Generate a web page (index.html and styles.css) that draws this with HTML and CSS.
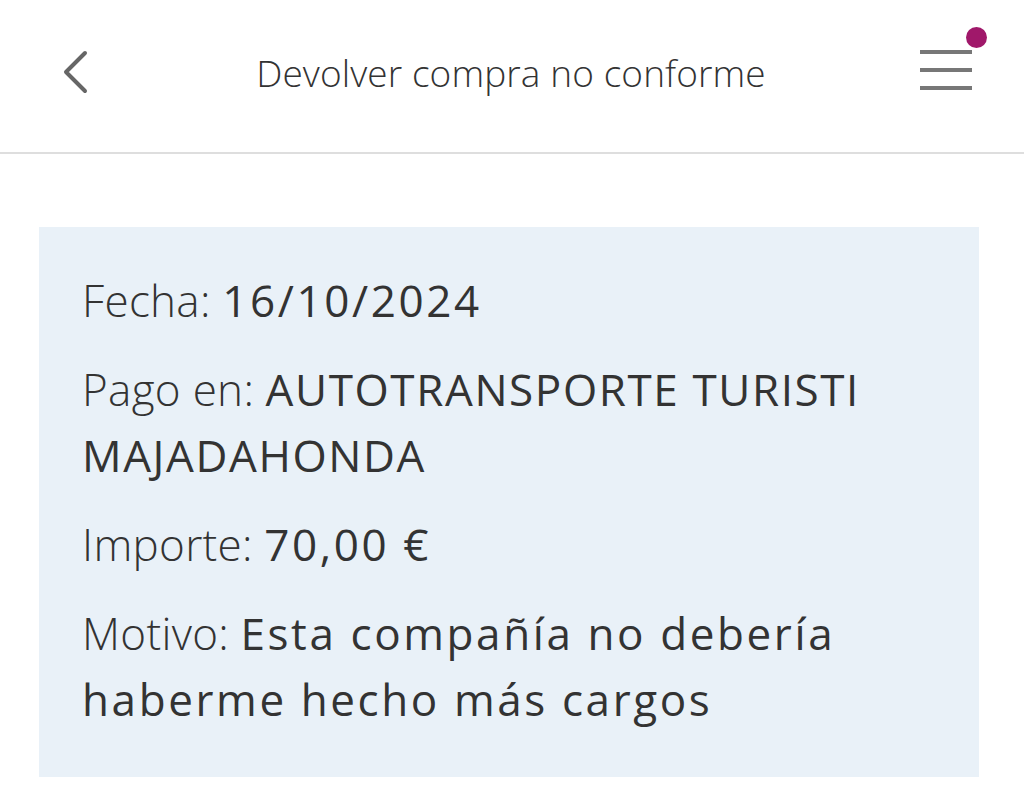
FILE: index.html
```html
<!DOCTYPE html>
<html lang="es">
<head>
<meta charset="utf-8">
<title>Devolver compra no conforme</title>
<link rel="stylesheet" href="styles.css">
</head>
<body>
<header class="topbar">
  <button class="icon-btn back" aria-label="Volver">
    <svg width="30" height="44" viewBox="0 0 30 44"><path d="M25 3 L6 22 L25 41" fill="none" stroke="#666" stroke-width="4" stroke-linecap="round" stroke-linejoin="round"/></svg>
  </button>
  <h1 class="title">Devolver compra no conforme</h1>
  <button class="icon-btn menu" aria-label="Menú">
    <span class="bar"></span><span class="bar"></span><span class="bar"></span>
    <span class="dot"></span>
  </button>
</header>
<main class="content">
  <section class="card">
    <p class="row"><span class="label">Fecha:</span> <span class="value">16/10/2024</span></p>
    <p class="row"><span class="label">Pago en:</span> <span class="value caps">AUTOTRANSPORTE TURISTI MAJADAHONDA</span></p>
    <p class="row"><span class="label">Importe:</span> <span class="value">70,00 €</span></p>
    <p class="row"><span class="label">Motivo:</span> <span class="value">Esta compañía no debería haberme hecho más cargos</span></p>
  </section>
</main>
</body>
</html>
```
FILE: styles.css
```css
* { box-sizing: border-box; }
html, body { margin: 0; padding: 0; background: #fff; }
body {
  font-family: "Open Sans", "DejaVu Sans", sans-serif;
  color: #333;
  width: 1024px;
  height: 798px;
  overflow: hidden;
}
.topbar {
  height: 154px;
  border-bottom: 2px solid #dedede;
  display: flex;
  align-items: center;
  justify-content: space-between;
  padding: 0 52px 8px 60px;
  position: relative;
}
.icon-btn {
  background: none;
  border: 0;
  padding: 0;
  display: flex;
}
.title {
  margin: 0 0 0 12px;
  font-weight: 300;
  font-size: 37px;
  color: #333;
  letter-spacing: 0.1px;
}
.menu {
  position: relative;
  flex-direction: column;
  gap: 14px;
  width: 52px;
  margin-top: -4px;
}
.bar {
  display: block;
  height: 4px;
  width: 52px;
  background: #777;
}
.dot {
  position: absolute;
  right: -15px;
  top: -23px;
  width: 21px;
  height: 21px;
  border-radius: 50%;
  background: #a0186a;
}
.content {
  padding: 73px 45px 0 39px;
}
.card {
  background: #e9f1f8;
  padding: 40px 40px 45px 43px;
  display: flex;
  flex-direction: column;
  gap: 23px;
}
.row {
  margin: 0;
  font-size: 44px;
  line-height: 66px;
  color: #333;
}
.label { font-weight: 300; letter-spacing: 0.3px; }
.value { font-weight: 500; letter-spacing: 2.6px; }
.value.caps { letter-spacing: 1.6px; }
```
